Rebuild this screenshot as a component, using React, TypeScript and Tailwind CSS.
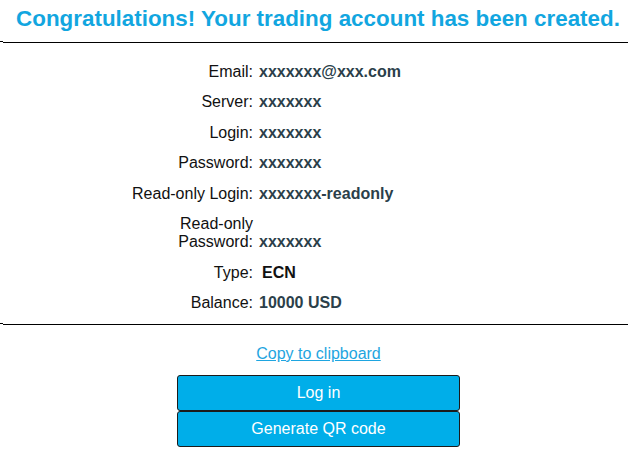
import React from "react";

const rows: { label: React.ReactNode; value: string; cls?: string }[] = [
  { label: "Email:", value: "xxxxxxx@xxx.com" },
  { label: "Server:", value: "xxxxxxx" },
  { label: "Login:", value: "xxxxxxx" },
  { label: "Password:", value: "xxxxxxx" },
  { label: "Read-only Login:", value: "xxxxxxx-readonly" },
  { label: "Read-only Password:", value: "xxxxxxx" },
  { label: "Type:", value: "ECN", cls: "ml-[9px] text-[#111111]" },
  { label: "Balance:", value: "10000 USD" },
];

export default function App() {
  return (
    <div
      className="w-[628px] h-[456px] bg-white overflow-hidden leading-[18.4px] text-[16px] text-[#111]"
      style={{ fontFamily: '"Liberation Sans", Arial, sans-serif' }}
    >
      <div className="h-[42px] pt-[6px] pl-[8px] text-center">
        <h1 className="text-[22.4px] font-bold text-[#12a6e0] leading-[26px] whitespace-nowrap">
          Congratulations! Your trading account has been created.
        </h1>
      </div>
      <div className="relative">
        <div className="h-px bg-black ml-[3px]" />
        <div className="absolute left-0 top-[-1px] w-[3px] h-px bg-black" />
      </div>
      <div className="mt-[14px] ml-[113px]">
        {rows.map((r, i) => (
          <div key={i} className="flex items-end py-[6px]">
            <div className="w-[140px] text-right text-[#111]">{r.label}</div>
            <div className={`font-bold ${r.cls ?? "ml-[6px] text-[#2b3f4a]"}`}>{r.value}</div>
          </div>
        ))}
      </div>
      <div className="mt-[5px] relative">
        <div className="h-px bg-black ml-[3px]" />
        <div className="absolute left-0 top-[-1px] w-[3px] h-px bg-black" />
      </div>
      <div className="ml-[177px] w-[283px] flex flex-col items-center">
        <a href="#" className="mt-[20px] text-[#1ea5e0] underline">
          Copy to clipboard
        </a>
        <button className="mt-[12px] w-[283px] h-[36px] bg-[#00aee9] border border-[#1b1b1b] rounded-[3px] text-white text-[16px]">
          Log in
        </button>
        <button className="w-[283px] h-[36px] bg-[#00aee9] border border-[#1b1b1b] rounded-[3px] text-white text-[16px]">
          Generate QR code
        </button>
      </div>
    </div>
  );
}
